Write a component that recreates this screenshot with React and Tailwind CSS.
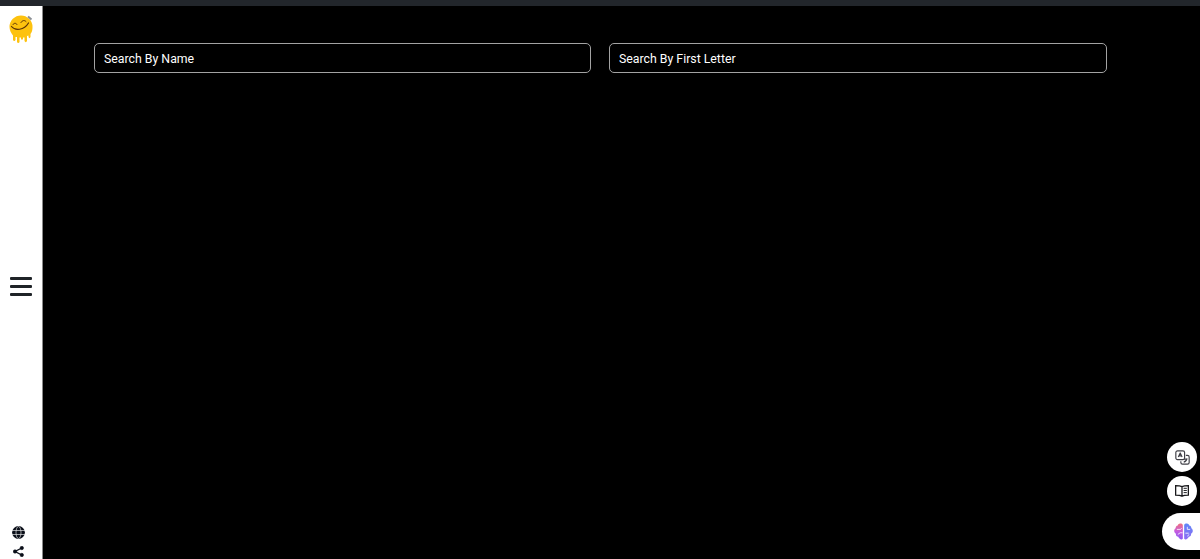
import React from 'react'

function Logo() {
  return (
    <svg width="24" height="28" viewBox="0 0 24 28">
      <path d="M.5 12A11.500 11.500 0 0 1 23.500 12C23.500 15 23 17 21.500 19V22C21 23.500 20 23.500 19.500 22V20.500L18 21V26C17.500 27.500 16 27.500 15.500 26V22.500H14V24C13.500 25 12.500 25 12 24V22.500H10.500V27C10 28.300 8.500 28.300 8 27V22H6.500V25C6 26.300 4.500 26.300 4 25V20.500C2 18 .5 15 .5 12Z" fill="#fdc20f" />
      <path d="M2.500 11.500C6 16 15 15.500 19.500 8" fill="none" stroke="#5b3208" strokeWidth="1.200" strokeLinecap="round" />
      <path d="M4 9.500C5 7.800 7 7.800 8 9.500" fill="none" stroke="#5b3208" strokeWidth="1" strokeLinecap="round" />
      <path d="M12 7.500C13.500 5 15.500 5 17 6.500" fill="none" stroke="#5b3208" strokeWidth="1" strokeLinecap="round" />
      <path d="M19 1.500L22.500 4.500" stroke="#8b8f94" strokeWidth="2" />
    </svg>
  )
}

function GlobeIcon() {
  return (
    <svg width="13" height="13" viewBox="0 0 13 13" fill="none">
      <circle cx="6.500" cy="6.500" r="6.400" fill="#0b0f19" />
      <ellipse cx="6.500" cy="6.500" rx="2.500" ry="6" stroke="#ffffff" strokeWidth="0.600" />
      <path d="M0 4.500H13M0 8.500H13" stroke="#ffffff" strokeWidth="0.600" />
    </svg>
  )
}

function ShareIcon() {
  return (
    <svg width="11" height="11" viewBox="0 0 11 11" fill="#0b0f19" stroke="#0b0f19">
      <circle cx="8.800" cy="2" r="1.700" strokeWidth="0.600" />
      <circle cx="2" cy="5.500" r="1.700" strokeWidth="0.600" />
      <circle cx="8.800" cy="9" r="1.700" strokeWidth="0.600" />
      <path d="M8.800 2L2 5.500L8.800 9" fill="none" strokeWidth="1.400" />
    </svg>
  )
}

function TranslateIcon() {
  return (
    <svg width="15" height="15" viewBox="0 0 18 18" fill="none" stroke="#3f3f46" strokeWidth="1.400" strokeLinejoin="round">
      <rect x="1" y="1" width="10.500" height="10.500" rx="2" />
      <path d="M4 8.500L6.250 3.500L8.500 8.500M4.800 7H7.700" />
      <path d="M13 6.500H15C16 6.500 17 7.300 17 8.500V15C17 16 16 17 15 17H9C7.800 17 7 16 7 15V13.500" />
      <path d="M10.500 14.500C12.500 14 14 12.500 14.500 10M11 11H14.500" />
    </svg>
  )
}

function BookIcon() {
  return (
    <svg width="14" height="12" viewBox="0 0 13 11" fill="none" stroke="#18181b" strokeWidth="1.200">
      <path d="M6.500 1.500C5 .8 2.500 .6 .6 .6V9.300C2.500 9.300 5 9.400 6.500 10.300C8 9.400 10.500 9.300 12.400 9.300V.6C10.500 .6 8 .8 6.500 1.500ZM6.500 1.500V10.300" />
      <path d="M8 3H11M8 5H11M8 7H11" strokeWidth="0.900" />
    </svg>
  )
}

function BrainIcon() {
  return (
    <svg width="19" height="17" viewBox="0 0 20 20" preserveAspectRatio="none">
      <defs>
        <linearGradient id="brainLeft" x1="0" y1="0" x2="0" y2="1">
          <stop offset="0" stopColor="#f0727d" />
          <stop offset="0.500" stopColor="#c45be0" />
          <stop offset="1" stopColor="#8b5cf6" />
        </linearGradient>
        <linearGradient id="brainRight" x1="0" y1="0" x2="0" y2="1">
          <stop offset="0" stopColor="#5f86f7" />
          <stop offset="1" stopColor="#8f6cf3" />
        </linearGradient>
      </defs>
      <path d="M9.300 2.500C9.300 1.300 8 .5 6.500 .6C5 .7 4 1.800 4 3C2.500 3.300 1.500 4.700 1.800 6.200C.5 7 0 8.500 .3 10C.5 11.200 1.200 12 2 12.500C1.800 14.500 3 16 4.500 16.200C5 18 6.500 19.400 8 19.300C8.800 19.300 9.300 18.800 9.300 18Z" fill="url(#brainLeft)" />
      <path d="M10.700 2.500C10.700 1.300 12 .5 13.500 .6C15 .7 16 1.800 16 3C17.500 3.300 18.500 4.700 18.200 6.200C19.500 7 20 8.500 19.700 10C19.500 11.200 18.800 12 18 12.500C18.200 14.500 17 16 15.500 16.200C15 18 13.500 19.400 12 19.300C11.200 19.300 10.700 18.800 10.700 18Z" fill="url(#brainRight)" />
      <path d="M3 7.500H7L8 6M4 13.500L6.500 11.500H9M14 4.500V7.500H17M12 12H15.500M14 15.500L16 13.500" fill="none" stroke="#ffffff" strokeWidth="0.900" />
    </svg>
  )
}

function SearchInput({ placeholder, className }) {
  return (
    <input
      type="text"
      placeholder={placeholder}
      className={`h-[30px] rounded-[5px] border border-[#a3a3a3] bg-black px-[9px] pt-[2px] text-[12.300px] text-white outline-none placeholder:text-white ${className}`}
    />
  )
}

function App() {
  return (
    <div
      className="relative flex h-screen flex-col overflow-hidden bg-black"
      style={{ fontFamily: 'Roboto, "Noto Sans", sans-serif' }}
    >
      <div className="h-[6px] shrink-0 bg-[#22262b]" />

      <div className="flex min-h-0 flex-1">
        <aside className="flex w-[43px] shrink-0 flex-col items-center justify-between border-r border-[#8a8a8a] bg-white pt-[9px] pb-[2px]">
          <Logo />
          <div className="mt-[4px] flex flex-col gap-[5px]">
            <span className="h-[3px] w-[22px] rounded-[1px] bg-[#1f2328]" />
            <span className="h-[3px] w-[22px] rounded-[1px] bg-[#1f2328]" />
            <span className="h-[3px] w-[22px] rounded-[1px] bg-[#1f2328]" />
          </div>
          <div className="flex flex-col items-center gap-[7px] pr-[6px]">
            <GlobeIcon />
            <ShareIcon />
          </div>
        </aside>

        <main className="flex flex-1 gap-[18px] pt-[37px] pr-[93px] pl-[51px]">
          <SearchInput placeholder="Search By Name" className="w-[497px] shrink-0" />
          <SearchInput placeholder="Search By First Letter" className="min-w-0 flex-1" />
        </main>
      </div>

      {/* floating helpers */}
      <div className="absolute right-0 bottom-[9px] flex flex-col items-end gap-[4px]">
        <button className="mr-[3px] flex h-[30px] w-[30px] items-center justify-center rounded-full bg-white">
          <TranslateIcon />
        </button>
        <button className="mr-[3px] flex h-[30px] w-[30px] items-center justify-center rounded-full bg-white">
          <BookIcon />
        </button>
        <button className="mt-[3px] flex h-[37px] w-[38px] items-center rounded-l-full bg-white pl-[12px]">
          <BrainIcon />
        </button>
      </div>
    </div>
  )
}

export default App
